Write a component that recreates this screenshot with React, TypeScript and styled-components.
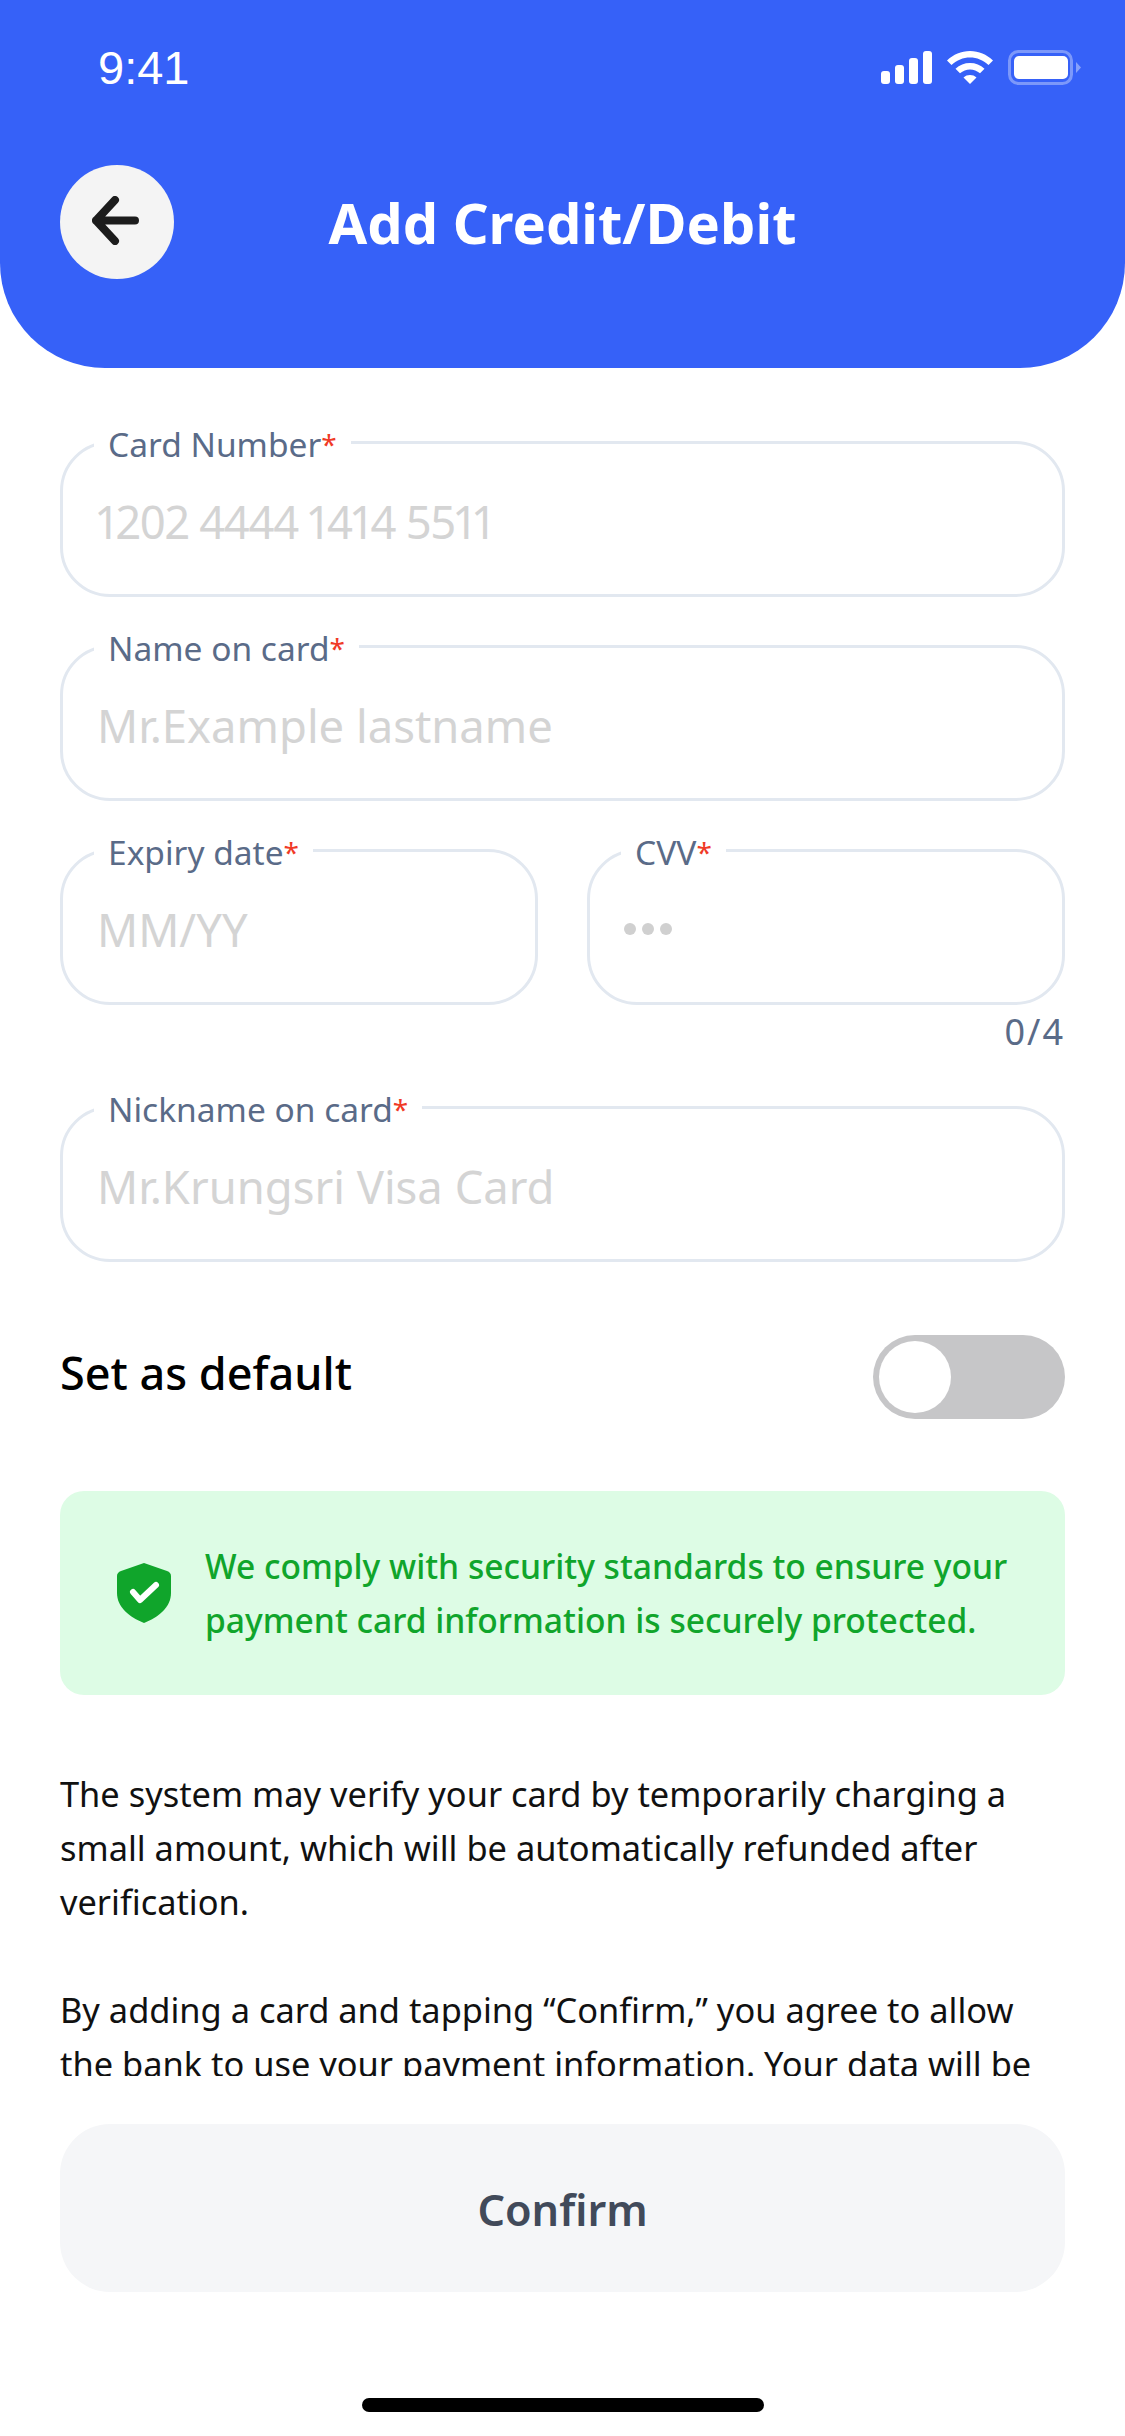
import styled, { createGlobalStyle } from "styled-components";

const GlobalStyle = createGlobalStyle`
  html, body {
    margin: 0;
    padding: 0;
    background: #ffffff;
  }
  * {
    box-sizing: border-box;
  }
`;

const Page = styled.div`
  width: 1125px;
  height: 2436px;
  display: flex;
  flex-direction: column;
  background: #ffffff;
  font-family: "Noto Sans", "Open Sans", sans-serif;
  overflow: hidden;
`;

const Header = styled.header`
  height: 368px;
  flex-shrink: 0;
  background: #3661f8;
  border-radius: 0 0 105px 105px;
`;

const StatusBar = styled.div`
  height: 134px;
  padding: 0 43px 0 98px;
  display: flex;
  justify-content: space-between;
  align-items: center;
`;

const Time = styled.span`
  font-family: "Liberation Sans", Arial, sans-serif;
  font-size: 47px;
  color: #ffffff;
`;

const StatusIcons = styled.div`
  display: flex;
  align-items: center;
  gap: 15px;
`;

const Nav = styled.div`
  display: grid;
  grid-template-columns: 114px 1fr 114px;
  align-items: center;
  padding: 31px 60px 0;
`;

const BackButton = styled.button`
  width: 114px;
  height: 114px;
  padding: 0 3px 3px 0;
  border: none;
  border-radius: 50%;
  background: #f4f4f4;
  display: flex;
  justify-content: center;
  align-items: center;
`;

const Title = styled.h1`
  margin: 0;
  text-align: center;
  font-size: 56px;
  font-weight: 700;
  color: #ffffff;
`;

const Content = styled.main`
  flex: 1;
  min-height: 0;
  overflow: hidden;
  padding: 73px 60px 0;
`;

const FieldStack = styled.div`
  display: flex;
  flex-direction: column;
  gap: 48px;
`;

const FieldRow = styled.div`
  display: grid;
  grid-template-columns: 478px 478px;
  justify-content: space-between;
`;

const Field = styled.div`
  position: relative;
  height: 156px;
  padding: 3px 0 0 34px;
  display: flex;
  align-items: center;
  border: 3px solid #e2e8f0;
  border-radius: 50px;
`;

const FieldLabel = styled.label`
  position: absolute;
  top: -20px;
  left: 31px;
  padding: 0 14px;
  background: #ffffff;
  font-size: 33.5px;
  line-height: 40px;
  color: #5a6b88;
`;

const Required = styled.span`
  font-size: 28px;
  line-height: 0;
  vertical-align: 2px;
  color: #f03a26;
`;

const Placeholder = styled.span<{ $spacing?: number }>`
  font-size: 45.4px;
  font-variant-numeric: proportional-nums;
  letter-spacing: ${(props) => props.$spacing ?? 0}px;
  color: #d4d4d4;
`;

const CvvDots = styled.div`
  display: flex;
  gap: 6px;
`;

const CvvDot = styled.span`
  width: 12px;
  height: 12px;
  border-radius: 50%;
  background: #d0d0d0;
`;

const Counter = styled.div`
  margin: 8px 0 7px;
  text-align: right;
  font-size: 36px;
  line-height: 38px;
  letter-spacing: 2px;
  color: #5a6b88;
`;

const DefaultRow = styled.div`
  margin-top: 73px;
  display: flex;
  justify-content: space-between;
  align-items: center;
`;

const DefaultLabel = styled.span`
  margin-bottom: 10px;
  font-size: 45px;
  font-weight: 500;
  color: #000000;
`;

const Toggle = styled.div`
  width: 192px;
  height: 84px;
  padding: 6px;
  border-radius: 42px;
  background: #c6c6c8;
`;

const ToggleKnob = styled.div`
  width: 72px;
  height: 72px;
  border-radius: 50%;
  background: #ffffff;
`;

const SecurityNote = styled.div`
  margin-top: 72px;
  height: 204px;
  padding-left: 57px;
  display: flex;
  align-items: center;
  gap: 34px;
  border-radius: 24px;
  background: #ddfce5;
`;

const SecurityText = styled.p`
  margin: 0;
  font-size: 33.6px;
  font-weight: 500;
  line-height: 54px;
  color: #10a52b;
`;

const Terms = styled.div`
  margin-top: 72px;
`;

const TermsParagraph = styled.p`
  margin: 0 0 54px;
  font-size: 34.4px;
  line-height: 54px;
  color: #111111;
`;

const Footer = styled.footer`
  flex-shrink: 0;
  padding: 48px 60px 24px;
  display: flex;
  flex-direction: column;
  align-items: center;
`;

const ConfirmButton = styled.button`
  width: 100%;
  height: 168px;
  padding: 2px 0 0;
  border: none;
  border-radius: 50px;
  background: #f5f6f8;
  font-family: inherit;
  font-size: 43.2px;
  font-weight: 600;
  color: #414a5a;
`;

const HomeBar = styled.div`
  margin-top: 106px;
  width: 402px;
  height: 14px;
  border-radius: 7px;
  background: #000000;
`;

const SignalIcon = () => (
  <svg width="51" height="33" viewBox="0 0 51 33" fill="#ffffff">
    <rect x="0" y="20" width="9" height="13" rx="3" />
    <rect x="14" y="14" width="9" height="19" rx="3" />
    <rect x="28" y="7" width="9" height="26" rx="3" />
    <rect x="42" y="0" width="9" height="33" rx="3" />
  </svg>
);

const WifiIcon = () => (
  <svg width="46" height="33" viewBox="0 0 46 33" fill="#ffffff">
    <path d="M23 0C14 0 6.5 3.5 0 9.5L4.5 14C10 9 16 6.5 23 6.5S36 9 41.5 14L46 9.5C39.5 3.500 32 0 23 0Z" />
    <path d="M23 12C17.500 12 12.500 14 8.500 17.800L13 22.300C16 19.800 19.300 18.500 23 18.500S30 19.800 33 22.300L37.500 17.800C33.500 14 28.500 12 23 12Z" />
    <path d="M23 24C20.500 24 18.300 24.800 16.500 26.500L23 33L29.500 26.500C27.700 24.800 25.500 24 23 24Z" />
  </svg>
);

const BatteryIcon = () => (
  <svg width="74" height="35" viewBox="0 0 74 35" fill="none">
    <rect x="1.500" y="1.500" width="62" height="32" rx="9" stroke="#ffffff" strokeOpacity="0.35" strokeWidth="3" />
    <rect x="6" y="6" width="54" height="23" rx="5" fill="#ffffff" />
    <path d="M68 12L73 17.500L68 23Z" fill="#ffffff" fillOpacity="0.4" />
  </svg>
);

const BackIcon = () => (
  <svg width="47" height="49" viewBox="0 0 47 49" fill="none">
    <path
      d="M23 4L4 24.500L23 45M4 24.500H43"
      stroke="#1c1c1c"
      strokeWidth="8"
      strokeLinecap="round"
      strokeLinejoin="round"
    />
  </svg>
);

const ShieldIcon = () => (
  <svg width="54" height="60" viewBox="0 0 54 60" style={{ flexShrink: 0 }}>
    <path
      d="M27 0L50 8C52.500 9 54 10.500 54 13V30C54 44 42 54 27 60C12 54 0 44 0 30V13C0 10.500 1.500 9 4 8Z"
      fill="#10a52b"
    />
    <path
      d="M16 29L23 37L39 22"
      fill="none"
      stroke="#ffffff"
      strokeWidth="6"
      strokeLinecap="round"
      strokeLinejoin="round"
    />
  </svg>
);

const App = () => {
  return (
    <Page>
      <GlobalStyle />
      <Header>
        <StatusBar>
          <Time>9:41</Time>
          <StatusIcons>
            <SignalIcon />
            <WifiIcon />
            <BatteryIcon />
          </StatusIcons>
        </StatusBar>
        <Nav>
          <BackButton aria-label="Back">
            <BackIcon />
          </BackButton>
          <Title>Add Credit/Debit</Title>
        </Nav>
      </Header>

      <Content>
        <FieldStack>
          <Field>
            <FieldLabel>
              Card Number<Required>*</Required>
            </FieldLabel>
            <Placeholder $spacing={-1.3}>1202 4444 1414 5511</Placeholder>
          </Field>
          <Field>
            <FieldLabel>
              Name on card<Required>*</Required>
            </FieldLabel>
            <Placeholder>Mr.Example lastname</Placeholder>
          </Field>
          <FieldRow>
            <Field>
              <FieldLabel>
                Expiry date<Required>*</Required>
              </FieldLabel>
              <Placeholder>MM/YY</Placeholder>
            </Field>
            <div>
              <Field>
                <FieldLabel>
                  CVV<Required>*</Required>
                </FieldLabel>
                <CvvDots>
                  <CvvDot />
                  <CvvDot />
                  <CvvDot />
                </CvvDots>
              </Field>
              <Counter>0/4</Counter>
            </div>
          </FieldRow>
          <Field>
            <FieldLabel>
              Nickname on card<Required>*</Required>
            </FieldLabel>
            <Placeholder>Mr.Krungsri Visa Card</Placeholder>
          </Field>
        </FieldStack>

        <DefaultRow>
          <DefaultLabel>Set as default</DefaultLabel>
          <Toggle>
            <ToggleKnob />
          </Toggle>
        </DefaultRow>

        <SecurityNote>
          <ShieldIcon />
          <SecurityText>
            We comply with security standards to ensure your
            <br />
            payment card information is securely protected.
          </SecurityText>
        </SecurityNote>

        <Terms>
          <TermsParagraph>
            The system may verify your card by temporarily charging a small
            amount, which will be automatically refunded after verification.
          </TermsParagraph>
          <TermsParagraph>
            By adding a card and tapping “Confirm,” you agree to allow the bank
            to use your payment information. Your data will be kept secure and
            used only for this service.
          </TermsParagraph>
        </Terms>
      </Content>

      <Footer>
        <ConfirmButton>Confirm</ConfirmButton>
        <HomeBar />
      </Footer>
    </Page>
  );
};

export default App;
